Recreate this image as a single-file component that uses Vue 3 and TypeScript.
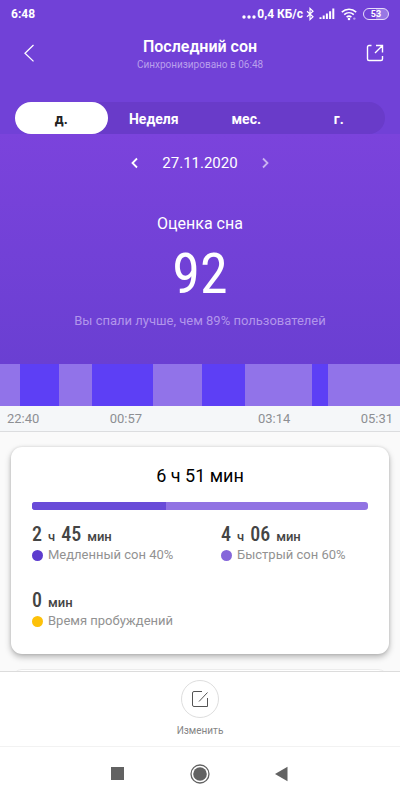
<script setup lang="ts">
import { ref } from 'vue'

interface Segment {
  kind: 'deep' | 'light'
  span: number
}

interface Part {
  value: string
  unit: string
}

interface Stat {
  id: string
  label: string
  parts: Part[]
}

const periods: string[] = ['д.', 'Неделя', 'мес.', 'г.']
const activePeriod = ref(0)

const segments: Segment[] = [
  { kind: 'light', span: 20 },
  { kind: 'deep', span: 39 },
  { kind: 'light', span: 33 },
  { kind: 'deep', span: 61 },
  { kind: 'light', span: 49 },
  { kind: 'deep', span: 43 },
  { kind: 'light', span: 67 },
  { kind: 'deep', span: 16 },
  { kind: 'light', span: 72 },
]

const timeGroups: string[][] = [
  ['22:40', '00:57'],
  ['03:14', '05:31'],
]

const stats: Stat[] = [
  {
    id: 'deep',
    label: 'Медленный сон 40%',
    parts: [
      { value: '2', unit: 'ч' },
      { value: '45', unit: 'мин' },
    ],
  },
  {
    id: 'light',
    label: 'Быстрый сон 60%',
    parts: [
      { value: '4', unit: 'ч' },
      { value: '06', unit: 'мин' },
    ],
  },
  { id: 'awake', label: 'Время пробуждений', parts: [{ value: '0', unit: 'мин' }] },
]

const deepShare = 40
</script>

<template>
  <div class="screen">
    <div class="hero">
      <div class="hero-top">
        <div class="status">
          <span class="clock">6:48</span>
          <div class="status-right">
            <svg class="dots" viewBox="0 0 14 14" aria-hidden="true">
              <circle cx="2" cy="10" r="1.7" /><circle cx="7" cy="10" r="1.7" /><circle cx="12" cy="10" r="1.7" />
            </svg>
            <span class="speed">0,4 КБ/с</span>
            <svg class="bluetooth" viewBox="0 0 8 14" aria-hidden="true">
              <path d="M1 4.2 7 9.8 4 12.6V1.4L7 4.2 1 9.8" />
            </svg>
            <svg class="signal" viewBox="0 0 16 14" aria-hidden="true">
              <path d="M1.5 12v-1.8M4.7 12V8.6M7.9 12V6.6M11.1 12V4.2M14.3 12V1.6" />
            </svg>
            <svg class="wifi" viewBox="0 0 16 14" aria-hidden="true">
              <path d="M.8 5.2C5 1.2 11 1.2 15.2 5.2M3.2 7.7C6 5.1 10 5.1 12.8 7.7M5.6 10.1C7.1 8.8 8.9 8.8 10.4 10.1" />
              <circle cx="8" cy="12" r="1.3" />
              <circle class="wifi-mark" cx="13.3" cy="11.6" r="1.2" />
            </svg>
            <span class="battery">53</span>
          </div>
        </div>

        <header class="header">
          <button class="icon-button" type="button" aria-label="Назад">
            <svg class="back" viewBox="0 0 12 20" aria-hidden="true"><path d="M10.5 2 2 10.2l8.5 8.2" /></svg>
          </button>
          <div class="titles">
            <h1>Последний сон</h1>
            <p>Синхронизировано в 06:48</p>
          </div>
          <button class="icon-button end" type="button" aria-label="Поделиться">
            <svg class="share" viewBox="0 0 18 18" aria-hidden="true">
              <path d="M5.5 1.5H3Q1.5 1.5 1.5 3v12q0 1.5 1.5 1.5h12q1.5 0 1.5-1.5v-3M10 1.5h6.5v7M16.5 1.5 9 9" />
            </svg>
          </button>
        </header>

        <nav class="tabs" aria-label="Период">
          <button
            v-for="(period, i) in periods"
            :key="period"
            type="button"
            class="tab"
            :class="{ active: activePeriod === i }"
            @click="activePeriod = i"
          >
            {{ period }}
          </button>
        </nav>
      </div>

      <div class="score">
        <div class="date-row">
          <button class="step" type="button" aria-label="Предыдущий день">
            <svg viewBox="0 0 10 12" aria-hidden="true"><path d="M7 1.5 2.5 6 7 10.5" /></svg>
          </button>
          <span class="date">27.11.2020</span>
          <button class="step faded" type="button" aria-label="Следующий день">
            <svg viewBox="0 0 10 12" aria-hidden="true"><path d="M3 1.5 7.5 6 3 10.5" /></svg>
          </button>
        </div>
        <h2>Оценка сна</h2>
        <div class="points">92</div>
        <p class="compare">Вы спали лучше, чем 89% пользователей</p>
      </div>
    </div>

    <div class="phases">
      <div
        v-for="(segment, i) in segments"
        :key="i"
        :class="['phase', segment.kind]"
        :style="{ flexGrow: segment.span }"
      ></div>
    </div>
    <div class="times">
      <div v-for="(group, i) in timeGroups" :key="i" class="time-group">
        <span v-for="time in group" :key="time">{{ time }}</span>
      </div>
    </div>

    <main class="content">
      <section class="card">
        <h3>6 ч 51 мин</h3>
        <div class="ratio"><div class="ratio-deep" :style="{ width: deepShare + '%' }"></div></div>
        <div class="stats">
          <div v-for="stat in stats" :key="stat.id" class="stat">
            <div class="amount">
              <template v-for="part in stat.parts" :key="part.unit">
                <span class="value">{{ part.value }}</span>
                <span class="unit">{{ part.unit }}</span>
              </template>
            </div>
            <div class="legend"><span :class="['dot', stat.id]"></span>{{ stat.label }}</div>
          </div>
        </div>
      </section>
      <section class="card next"></section>
    </main>

    <footer class="actions">
      <button class="edit" type="button">
        <span class="edit-circle">
          <svg viewBox="0 0 18 18" aria-hidden="true">
            <path d="M11 1.5H3Q1.5 1.5 1.5 3v12q0 1.5 1.5 1.5h13.5V8M16.5 2.5 8 11.5" />
          </svg>
        </span>
        <span>Изменить</span>
      </button>
    </footer>

    <nav class="system" aria-label="Система">
      <button type="button" aria-label="Недавние">
        <svg viewBox="0 0 20 20" aria-hidden="true"><rect x="3" y="3" width="13" height="13" /></svg>
      </button>
      <button type="button" aria-label="Домой">
        <svg viewBox="0 0 20 20" aria-hidden="true">
          <circle class="ring" cx="10" cy="10" r="9" /><circle cx="10" cy="10" r="6.8" />
        </svg>
      </button>
      <button type="button" aria-label="Назад">
        <svg viewBox="0 0 20 20" aria-hidden="true"><path d="M3 10 15.5 2.8v14.4z" /></svg>
      </button>
    </nav>
  </div>
</template>

<style>
body {
  margin: 0;
}
</style>

<style scoped>
.screen {
  display: flex;
  flex-direction: column;
  height: 100vh;
  font-family: Roboto, "Noto Sans", sans-serif;
  background: #fafafa;
  color: #000;
}
.screen * {
  box-sizing: border-box;
}
h1, h2, h3, p {
  margin: 0;
}
button {
  padding: 0;
  border: 0;
  background: none;
  font: inherit;
  color: inherit;
  cursor: pointer;
}
svg {
  display: block;
  fill: none;
  stroke: currentColor;
}
.hero {
  color: #fff;
  background: #7141d7;
}
.status {
  display: flex;
  align-items: center;
  justify-content: space-between;
  height: 28px;
  padding: 0 11px;
  font-size: 12px;
  font-weight: 700;
}
.status-right {
  display: flex;
  align-items: center;
}
.dots {
  width: 14px;
  height: 14px;
  fill: currentColor;
  stroke: none;
  margin-right: 1px;
}
.bluetooth {
  width: 8px;
  height: 14px;
  margin: 0 5px 0 3px;
  stroke-width: 1.2;
}
.signal {
  width: 16px;
  height: 14px;
  margin-right: 6px;
  stroke-width: 2;
}
.wifi {
  width: 16px;
  height: 14px;
  margin-right: 6px;
  stroke-width: 1.6;
}
.wifi circle {
  fill: currentColor;
  stroke: none;
}
.wifi .wifi-mark {
  opacity: 0.5;
}
.battery {
  width: 26px;
  height: 12px;
  border: 1px solid #e6dcfa;
  border-radius: 6px;
  background: linear-gradient(90deg, #7141d7 50%, #9877e4 50%);
  font-size: 9px;
  line-height: 10px;
  text-align: center;
}
.header {
  display: flex;
  align-items: center;
  justify-content: space-between;
  height: 50px;
  padding: 0 16px;
}
.icon-button {
  display: grid;
  place-items: center;
  width: 26px;
  height: 40px;
}
.icon-button.end {
  justify-items: end;
}
.back {
  width: 12px;
  height: 20px;
  stroke-width: 1.3;
}
.share {
  width: 18px;
  height: 18px;
  stroke-width: 1.4;
}
.titles {
  padding-top: 3px;
  text-align: center;
}
h1 {
  font-size: 16px;
  line-height: 20px;
  font-weight: 600;
}
.titles p {
  font-size: 10px;
  line-height: 16px;
  color: #b99fec;
}
.tabs {
  display: grid;
  grid-template-columns: repeat(4, 1fr);
  margin: 24px 15px 0;
  border-radius: 16px;
  background: #693bc9;
}
.tab {
  height: 32px;
  padding-top: 2px;
  border-radius: 16px;
  font-size: 14px;
  font-weight: 700;
}
.tab.active {
  background: #fff;
  color: #222;
}
.score {
  padding: 17px 15px 34px;
  background: linear-gradient(#7b43dc, #6a3fd2);
  text-align: center;
}
.date-row {
  display: flex;
  justify-content: center;
  align-items: center;
  gap: 22px;
  height: 24px;
}
.date {
  font-size: 15px;
}
.step svg {
  width: 10px;
  height: 12px;
  stroke-width: 1.8;
}
.faded {
  opacity: 0.6;
}
h2 {
  margin-top: 39px;
  font-size: 16px;
  line-height: 20px;
  font-weight: 400;
}
.points {
  margin-top: 12px;
  font-family: "Roboto Condensed", Roboto, sans-serif;
  font-size: 56px;
  line-height: 56px;
  font-weight: 400;
}
.compare {
  margin-top: 10px;
  font-size: 13px;
  line-height: 18px;
  color: #b296eb;
}
.phases {
  display: flex;
  height: 42px;
}
.phase {
  flex-basis: 0;
}
.phase.deep {
  background: #5d3ff5;
}
.phase.light {
  background: #9173e9;
}
.times {
  display: flex;
  justify-content: space-between;
  height: 26px;
  padding: 0 7px;
  border-bottom: 1px solid #dcdddf;
  background: #f5f7f9;
  font-size: 13px;
  line-height: 26px;
  color: #8d8f93;
}
.time-group {
  display: flex;
  justify-content: space-between;
  width: 35%;
}
.content {
  flex: 1 1 0;
  min-height: 0;
  overflow: hidden;
  padding: 15px 11px 0;
}
.card {
  padding: 17px 21px 24px;
  border-radius: 11px;
  background: #fff;
  box-shadow: 0 3px 6px rgba(0, 0, 0, 0.28), 0 0 3px rgba(0, 0, 0, 0.12);
}
.card.next {
  margin-top: 15px;
  border: 1px solid #ececec;
  box-shadow: none;
}
h3 {
  font-size: 18px;
  line-height: 24px;
  font-weight: 400;
  text-align: center;
}
.ratio {
  height: 8px;
  margin-top: 14px;
  border-radius: 3px;
  overflow: hidden;
  background: #9173e3;
}
.ratio-deep {
  height: 100%;
  background: #694bd8;
}
.stats {
  display: grid;
  grid-template-columns: 9fr 7fr;
  row-gap: 24px;
  margin-top: 12px;
}
.amount {
  display: flex;
  align-items: baseline;
  gap: 6px;
  height: 24px;
  color: #444;
}
.value {
  font-family: "Roboto Condensed", Roboto, sans-serif;
  font-size: 20px;
  line-height: 24px;
  font-weight: 500;
}
.unit {
  font-size: 13px;
  font-weight: 500;
}
.legend {
  display: flex;
  align-items: center;
  gap: 5px;
  font-size: 13px;
  line-height: 18px;
  color: #929292;
  white-space: nowrap;
}
.dot {
  width: 11px;
  height: 11px;
  border-radius: 50%;
}
.dot.deep {
  background: #5d3cce;
}
.dot.light {
  background: #8566da;
}
.dot.awake {
  background: #fdc109;
}
.actions {
  display: flex;
  justify-content: center;
  height: 75px;
  padding-top: 8px;
  border-top: 1px solid #dcdcdc;
  background: #fff;
}
.edit {
  display: flex;
  flex-direction: column;
  align-items: center;
  gap: 6px;
  font-size: 10px;
  line-height: 14px;
  color: #858585;
}
.edit-circle {
  display: grid;
  place-items: center;
  width: 38px;
  height: 38px;
  border: 1px solid #dedede;
  border-radius: 50%;
  color: #555;
}
.edit-circle svg {
  width: 18px;
  height: 18px;
}
.system {
  display: flex;
  justify-content: center;
  gap: 62px;
  height: 54px;
  border-top: 1px solid #f2f2f2;
  background: #fff;
  color: #626262;
}
.system svg {
  width: 20px;
  height: 20px;
  fill: currentColor;
  stroke: none;
}
.system .ring {
  fill: none;
  stroke: currentColor;
  stroke-width: 1.3;
}
</style>
